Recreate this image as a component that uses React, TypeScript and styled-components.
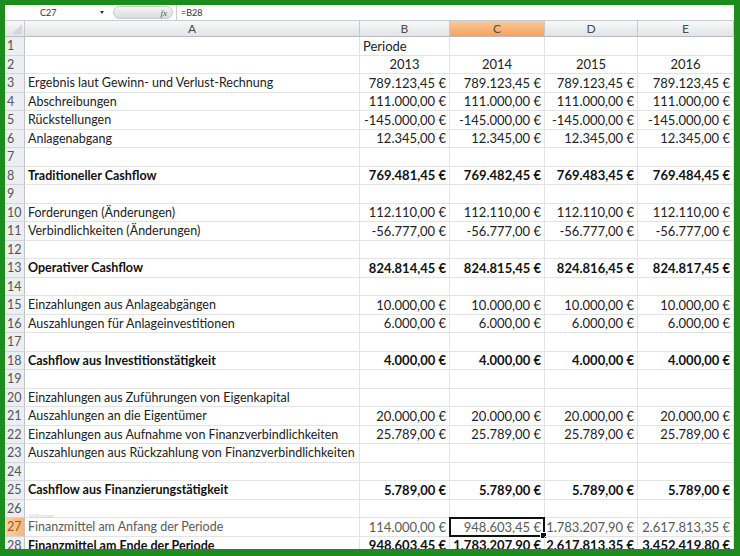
import React from "react";
import styled, { createGlobalStyle, css } from "styled-components";

const Global = createGlobalStyle`
  html, body { margin: 0; padding: 0; background: #fff; }
  #root { width: 740px; height: 556px; }
`;

const COLS = "20px 335px 90px 95px 93px 96px";
const FONT = `"Lato", "Open Sans", "Liberation Sans", sans-serif`;

const Frame = styled.div`
  width: 740px;
  height: 556px;
  box-sizing: border-box;
  border-style: solid;
  border-color: #1d8b1d;
  border-width: 5px 6px 7px 5px;
  background: #fff;
  overflow: hidden;
  display: flex;
  flex-direction: column;
  font-family: ${FONT};
`;

const FormulaBar = styled.div`
  height: 15px;
  flex: none;
  display: flex;
  align-items: center;
  border-bottom: 1px solid #c9ccd1;
  font-size: 9px;
  color: #333;
  background: #fff;
`;

const NameBox = styled.div`
  width: 104px;
  display: flex;
  align-items: center;
  justify-content: space-between;
  padding-left: 35px;
  padding-right: 5px;
  box-sizing: border-box;
`;

const Caret = styled.span`
  width: 0;
  height: 0;
  border-left: 2.5px solid transparent;
  border-right: 2.5px solid transparent;
  border-top: 3px solid #333;
`;

const Pill = styled.div`
  width: 60px;
  height: 13px;
  margin-left: 4px;
  border-radius: 7px;
  background: linear-gradient(#f4f5f6, #d9dbde);
  border: 1px solid #c6c9cd;
  box-sizing: border-box;
  display: flex;
  align-items: center;
  justify-content: flex-end;
  padding-right: 5px;
  font-family: "Liberation Serif", serif;
  font-style: italic;
  font-size: 9px;
  color: #555;
`;

const Formula = styled.div`
  margin-left: 3px;
  padding-left: 4px;
  border-left: 1px solid #c9ccd1;
  height: 15px;
  display: flex;
  align-items: center;
`;

const Sheet = styled.div`
  flex: 1;
  display: flex;
  flex-direction: column;
`;

const Row = styled.div<{ $h: number }>`
  display: grid;
  grid-template-columns: ${COLS};
  height: ${(p) => p.$h}px;
  flex: none;
`;

const HeadCell = styled.div<{ $active?: boolean }>`
  display: flex;
  align-items: center;
  justify-content: center;
  font-size: 12px;
  color: #4c4c4c;
  box-sizing: border-box;
  border-right: 1px solid #c5c9cf;
  border-bottom: 1px solid #b8bcc2;
  background: ${(p) =>
    p.$active
      ? "linear-gradient(#fbc99a, #f6a35e)"
      : "linear-gradient(#f7f8f9, #e1e4e8)"};
`;

const Corner = styled(HeadCell)`
  position: relative;
  &::after {
    content: "";
    position: absolute;
    right: 2px;
    bottom: 2px;
    width: 0;
    height: 0;
    border-left: 10px solid transparent;
    border-bottom: 10px solid #d3d6da;
  }
`;

const RowNum = styled.div<{ $active?: boolean }>`
  display: flex;
  align-items: center;
  padding-left: 2px;
  font-size: 12.5px;
  color: ${(p) => (p.$active ? "#a0581e" : "#555")};
  box-sizing: border-box;
  border-right: 1px solid #c0c4ca;
  border-bottom: 1px solid #d2d5d9;
  background: ${(p) =>
    p.$active ? "linear-gradient(90deg,#fbd1a6,#f7b57a)" : "#eceef1"};
`;

const Cell = styled.div<{
  $align?: "left" | "right" | "center";
  $bold?: boolean;
  $muted?: boolean;
  $size?: number;
}>`
  position: relative;
  display: flex;
  align-items: center;
  justify-content: ${(p) =>
    p.$align === "right" ? "flex-end" : p.$align === "center" ? "center" : "flex-start"};
  padding: 0 3px 0 3px;
  box-sizing: border-box;
  border-right: 1px solid #e1e3e5;
  border-bottom: 1px solid #e1e3e5;
  font-size: ${(p) => p.$size ?? 13}px;
  white-space: nowrap;
  color: ${(p) => (p.$muted ? "#5a5a5a" : "#222")};
  ${(p) =>
    p.$bold &&
    css`
      font-weight: 700;
      color: #111;
    `}
`;

const Selection = styled.div`
  position: absolute;
  left: -1px;
  top: -1px;
  right: -1px;
  bottom: -1px;
  border: 2px solid #111;
  pointer-events: none;
  &::after {
    content: "";
    position: absolute;
    right: -4px;
    bottom: -4px;
    width: 5px;
    height: 5px;
    background: #111;
    border: 1px solid #fff;
  }
`;

const Ghost = styled.span`
  position: absolute;
  left: 4px;
  top: -6px;
  font-size: 6px;
  color: #cfcfcf;
`;

type RowData = {
  label?: string;
  values?: string[];
  bold?: boolean;
  muted?: boolean;
};

const rep = (v: string) => [v, v, v, v];

const rows: RowData[] = [
  {},
  {},
  { label: "Ergebnis laut Gewinn- und Verlust-Rechnung", values: rep("789.123,45 €") },
  { label: "Abschreibungen", values: rep("111.000,00 €") },
  { label: "Rückstellungen", values: rep("-145.000,00 €") },
  { label: "Anlagenabgang", values: rep("12.345,00 €") },
  {},
  {
    label: "Traditioneller Cashflow",
    bold: true,
    values: ["769.481,45 €", "769.482,45 €", "769.483,45 €", "769.484,45 €"],
  },
  {},
  { label: "Forderungen (Änderungen)", values: rep("112.110,00 €") },
  { label: "Verbindlichkeiten (Änderungen)", values: rep("-56.777,00 €") },
  {},
  {
    label: "Operativer Cashflow",
    bold: true,
    values: ["824.814,45 €", "824.815,45 €", "824.816,45 €", "824.817,45 €"],
  },
  {},
  { label: "Einzahlungen aus Anlageabgängen", values: rep("10.000,00 €") },
  { label: "Auszahlungen für Anlageinvestitionen", values: rep("6.000,00 €") },
  {},
  { label: "Cashflow aus Investitionstätigkeit", bold: true, values: rep("4.000,00 €") },
  {},
  { label: "Einzahlungen aus Zuführungen von Eigenkapital" },
  { label: "Auszahlungen an die Eigentümer", values: rep("20.000,00 €") },
  { label: "Einzahlungen aus Aufnahme von Finanzverbindlichkeiten", values: rep("25.789,00 €") },
  { label: "Auszahlungen aus Rückzahlung von Finanzverbindlichkeiten" },
  {},
  { label: "Cashflow aus Finanzierungstätigkeit", bold: true, values: rep("5.789,00 €") },
  {},
  {
    label: "Finanzmittel am Anfang der Periode",
    muted: true,
    values: ["114.000,00 €", "948.603,45 €", "1.783.207,90 €", "2.617.813,35 €"],
  },
  {
    label: "Finanzmittel am Ende der Periode",
    bold: true,
    values: ["948.603,45 €", "1.783.207,90 €", "2.617.813,35 €", "3.452.419,80 €"],
  },
];

const years = ["2013", "2014", "2015", "2016"];

export default function App() {
  return (
    <>
      <Global />
      <Frame>
        <FormulaBar>
          <NameBox>
            <span>C27</span>
            <Caret />
          </NameBox>
          <Pill>fx</Pill>
          <Formula>=B28</Formula>
        </FormulaBar>
        <Sheet>
          <Row $h={16}>
            <Corner />
            <HeadCell>A</HeadCell>
            <HeadCell>B</HeadCell>
            <HeadCell $active>C</HeadCell>
            <HeadCell>D</HeadCell>
            <HeadCell>E</HeadCell>
          </Row>
          {rows.map((r, i) => {
            const n = i + 1;
            return (
              <Row key={n} $h={18.5}>
                <RowNum $active={n === 27}>{n}</RowNum>
                <Cell $bold={r.bold} $muted={r.muted} $size={12.5}>
                  {n === 27 && <Ghost>Mitlassen</Ghost>}
                  {r.label}
                </Cell>
                {[0, 1, 2, 3].map((c) => {
                  if (n === 1) {
                    return <Cell key={c}>{c === 0 ? "Periode" : ""}</Cell>;
                  }
                  if (n === 2) {
                    return (
                      <Cell key={c} $align="center">
                        {years[c]}
                      </Cell>
                    );
                  }
                  return (
                    <Cell key={c} $align="right" $bold={r.bold} $muted={r.muted}>
                      {r.values ? r.values[c] : ""}
                      {n === 27 && c === 1 && <Selection />}
                    </Cell>
                  );
                })}
              </Row>
            );
          })}
        </Sheet>
      </Frame>
    </>
  );
}
